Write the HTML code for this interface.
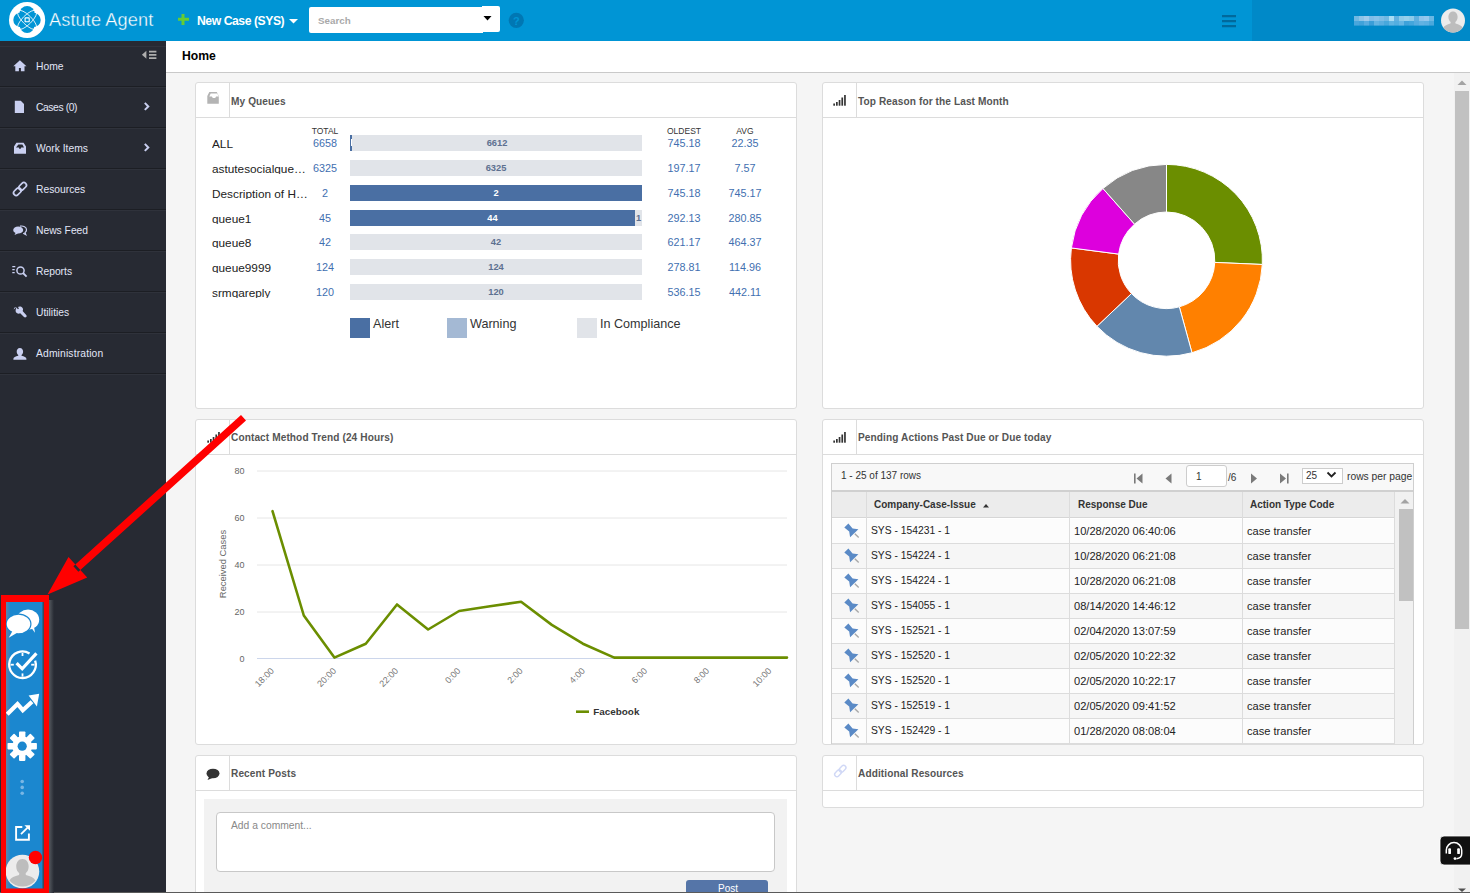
<!DOCTYPE html>
<html><head><meta charset="utf-8">
<style>
*{box-sizing:border-box;margin:0;padding:0}
html,body{width:1470px;height:893px;overflow:hidden;background:#f5f5f5;font-family:"Liberation Sans",sans-serif;position:relative}
.abs{position:absolute}
.t{position:absolute;white-space:nowrap;line-height:1}
#hdr{left:0;top:0;width:1470px;height:41px;background:#0095d5}
#hdr-r{left:1252px;top:0;width:218px;height:41px;background:#0089c8}
#side{left:0;top:41px;width:166px;height:852px;background:#272a33}
.sep{position:absolute;left:0;width:166px;height:2px;border-top:1px solid #1c1e24;border-bottom:1px solid #2f323b}
.nav{position:absolute;left:36px;font-size:10.3px;color:#e2e6f8;white-space:nowrap;line-height:1}
#title{left:166px;top:41px;width:1304px;height:32px;background:#fff;border-bottom:1px solid #c9c9c9}
.panel{position:absolute;background:#fff;border:1px solid #dcdcdc;border-radius:3px;overflow:hidden}
.ph{position:absolute;left:0;top:0;right:0;height:35px;border-bottom:1px solid #dcdcdc}
.ph .ic{position:absolute;left:0;top:0;width:34px;height:35px;border-right:1px solid #dcdcdc}
.ph .tt{position:absolute;left:35px;top:14px;line-height:1;font-size:10.1px;letter-spacing:0.1px;font-weight:bold;color:#555;white-space:nowrap}
#sb{left:1454px;top:73px;width:16px;height:820px;background:#f1f1f1}
#thumb{left:1455px;top:91px;width:14px;height:538px;background:#c1c1c1}
#ov{position:absolute;left:0;top:0;width:1470px;height:893px;pointer-events:none}
/* queues */
.ql{position:absolute;left:212px;width:97px;height:12px;overflow:hidden;font-size:11.8px;color:#222;white-space:nowrap;line-height:15px}
.qn{position:absolute;width:50px;text-align:center;font-size:10.8px;color:#3f6fb0;white-space:nowrap;line-height:15px}
.qh{position:absolute;width:50px;text-align:center;font-size:8.5px;color:#333;line-height:1}
.bar{position:absolute;left:350px;width:292px;height:16px;background:#e1e4e9}
.bd{position:absolute;left:0;top:0;height:16px;background:#4a6fa3}
.bl{position:absolute;top:0;height:16px;line-height:16px;text-align:center;font-size:9.3px;font-weight:bold;color:#5d7090}
.bl.w{color:#fff}
/* grid */
.gr{position:absolute;left:831px;width:565px;height:25px;border-bottom:1px solid #dedede;background:#fff;font-size:11px;color:#333;white-space:nowrap}
.gr div{position:absolute;top:0;line-height:25px}
.gr .c0{left:0;width:35px;height:25px;border-right:1px solid #dedede}
.gr .c1{left:36px;width:376px;height:25px;border-right:1px solid #dedede}
.gr .c2{left:412px;}
.gr .c3{left:416px}
</style></head><body>
<div id="hdr" class="abs"></div>
<div id="hdr-r" class="abs"></div>
<div class="t" style="left:49px;top:11px;font-size:18.2px;color:#fff;letter-spacing:0.1px;-webkit-text-stroke:0.35px #0095d5">Astute Agent</div>
<div class="t" style="left:197px;top:15px;font-size:12.2px;font-weight:bold;color:#fff;letter-spacing:-0.45px">New Case (SYS)</div>
<div class="abs" style="left:309px;top:7px;width:174px;height:26px;background:#fff;border-radius:2px 0 0 2px"></div>
<div class="abs" style="left:482px;top:6px;width:18px;height:26px;background:#fff;border-radius:0 2px 2px 0"></div>
<div class="t" style="left:318px;top:16px;font-size:9.8px;font-weight:bold;color:#a9a9a9">Search</div>

<div id="side" class="abs"></div>
<div class="abs" style="left:0;top:46px;width:166px;height:1px;background:#30333c"></div>
<div class="sep" style="top:86px"></div>
<div class="sep" style="top:127px"></div>
<div class="sep" style="top:168px"></div>
<div class="sep" style="top:209px"></div>
<div class="sep" style="top:250px"></div>
<div class="sep" style="top:291px"></div>
<div class="sep" style="top:332px"></div>
<div class="sep" style="top:373px"></div>
<div class="nav" style="top:62px">Home</div>
<div class="nav" style="top:103px;letter-spacing:-0.4px">Cases (0)</div>
<div class="nav" style="top:144px">Work Items</div>
<div class="nav" style="top:185px">Resources</div>
<div class="nav" style="top:226px">News Feed</div>
<div class="nav" style="top:267px">Reports</div>
<div class="nav" style="top:308px">Utilities</div>
<div class="nav" style="top:349px;letter-spacing:0.15px">Administration</div>

<div id="title" class="abs"></div>
<div class="t" style="left:182px;top:50px;font-size:12.2px;font-weight:bold;color:#000">Home</div>
<div id="sb" class="abs"></div>
<div id="thumb" class="abs"></div>

<div class="panel" style="left:195px;top:82px;width:602px;height:327px">
 <div class="ph"><div class="ic"></div><div class="tt">My Queues</div></div>
</div>
<div class="panel" style="left:822px;top:82px;width:602px;height:327px">
 <div class="ph"><div class="ic"></div><div class="tt">Top Reason for the Last Month</div></div>
</div>
<div class="panel" style="left:195px;top:419px;width:602px;height:326px">
 <div class="ph"><div class="ic"></div><div class="tt" style="top:13px">Contact Method Trend (24 Hours)</div></div>
</div>
<div class="panel" style="left:822px;top:419px;width:602px;height:326px">
 <div class="ph"><div class="ic"></div><div class="tt" style="top:13px">Pending Actions Past Due or Due today</div></div>
</div>
<div class="panel" style="left:195px;top:755px;width:602px;height:200px">
 <div class="ph"><div class="ic"></div><div class="tt" style="top:13px">Recent Posts</div></div>
</div>
<div class="panel" style="left:822px;top:755px;width:602px;height:53px">
 <div class="ph"><div class="ic"></div><div class="tt" style="top:13px">Additional Resources</div></div>
</div>
<div class="qh" style="left:300px;top:127px">TOTAL</div>
<div class="qh" style="left:659px;top:127px">OLDEST</div>
<div class="qh" style="left:720px;top:127px">AVG</div>
<div class="ql" style="top:137.00px">ALL</div>
<div class="qn" style="left:300px;top:136.00px">6658</div>
<div class="qn" style="left:659px;top:136.00px">745.18</div>
<div class="qn" style="left:720px;top:136.00px">22.35</div>
<div class="bar" style="top:135.00px"><div class="bd" style="left:0px;width:2px"></div><div class="bl" style="left:2px;width:290px">6612</div><div class="abs" style="left:1px;top:4px;width:1px;height:7px;background:#fff"></div></div>
<div class="ql" style="top:161.85px">astutesocialque…</div>
<div class="qn" style="left:300px;top:160.85px">6325</div>
<div class="qn" style="left:659px;top:160.85px">197.17</div>
<div class="qn" style="left:720px;top:160.85px">7.57</div>
<div class="bar" style="top:159.85px"><div class="bl" style="left:0px;width:292px">6325</div></div>
<div class="ql" style="top:186.70px">Description of H…</div>
<div class="qn" style="left:300px;top:185.70px">2</div>
<div class="qn" style="left:659px;top:185.70px">745.18</div>
<div class="qn" style="left:720px;top:185.70px">745.17</div>
<div class="bar" style="top:184.70px"><div class="bd" style="left:0px;width:292px"></div><div class="bl w" style="left:0px;width:292px">2</div></div>
<div class="ql" style="top:211.55px">queue1</div>
<div class="qn" style="left:300px;top:210.55px">45</div>
<div class="qn" style="left:659px;top:210.55px">292.13</div>
<div class="qn" style="left:720px;top:210.55px">280.85</div>
<div class="bar" style="top:209.55px"><div class="bd" style="left:0px;width:285px"></div><div class="bl w" style="left:0px;width:285px">44</div><div class="bl" style="left:285px;width:7px">1</div></div>
<div class="ql" style="top:236.40px">queue8</div>
<div class="qn" style="left:300px;top:235.40px">42</div>
<div class="qn" style="left:659px;top:235.40px">621.17</div>
<div class="qn" style="left:720px;top:235.40px">464.37</div>
<div class="bar" style="top:234.40px"><div class="bl" style="left:0px;width:292px">42</div></div>
<div class="ql" style="top:261.25px">queue9999</div>
<div class="qn" style="left:300px;top:260.25px">124</div>
<div class="qn" style="left:659px;top:260.25px">278.81</div>
<div class="qn" style="left:720px;top:260.25px">114.96</div>
<div class="bar" style="top:259.25px"><div class="bl" style="left:0px;width:292px">124</div></div>
<div class="ql" style="top:286.10px">srmqareply</div>
<div class="qn" style="left:300px;top:285.10px">120</div>
<div class="qn" style="left:659px;top:285.10px">536.15</div>
<div class="qn" style="left:720px;top:285.10px">442.11</div>
<div class="bar" style="top:284.10px"><div class="bl" style="left:0px;width:292px">120</div></div>
<div class="abs" style="left:350px;top:318px;width:20px;height:20px;background:#4a6fa3"></div>
<div class="abs" style="left:447px;top:318px;width:20px;height:20px;background:#a4b9d4"></div>
<div class="abs" style="left:577px;top:318px;width:20px;height:20px;background:#e1e4e9"></div>
<div class="t" style="left:373px;top:318px;font-size:12.6px;color:#333">Alert</div>
<div class="t" style="left:470px;top:318px;font-size:12.6px;color:#333">Warning</div>
<div class="t" style="left:600px;top:318px;font-size:12.6px;color:#333">In Compliance</div>
<svg class="abs" style="left:0;top:0" width="1470" height="893" viewBox="0 0 1470 893"><path d="M1166.50 164.40A95.9 95.9 0 0 1 1262.31 264.48L1214.75 262.41A48.3 48.3 0 0 0 1166.50 212.00Z" fill="#6b8e00" stroke="#fff" stroke-width="1" stroke-linejoin="round"/><path d="M1262.31 264.48A95.9 95.9 0 0 1 1191.97 352.76L1179.33 306.87A48.3 48.3 0 0 0 1214.75 262.41Z" fill="#ff8000" stroke="#fff" stroke-width="1" stroke-linejoin="round"/><path d="M1191.97 352.76A95.9 95.9 0 0 1 1096.94 326.31L1131.46 293.55A48.3 48.3 0 0 0 1179.33 306.87Z" fill="#6287ad" stroke="#fff" stroke-width="1" stroke-linejoin="round"/><path d="M1096.94 326.31A95.9 95.9 0 0 1 1071.40 247.95L1118.60 254.08A48.3 48.3 0 0 0 1131.46 293.55Z" fill="#d93700" stroke="#fff" stroke-width="1" stroke-linejoin="round"/><path d="M1071.40 247.95A95.9 95.9 0 0 1 1102.95 188.48L1134.50 224.13A48.3 48.3 0 0 0 1118.60 254.08Z" fill="#dd00dd" stroke="#fff" stroke-width="1" stroke-linejoin="round"/><path d="M1102.95 188.48A95.9 95.9 0 0 1 1166.50 164.40L1166.50 212.00A48.3 48.3 0 0 0 1134.50 224.13Z" fill="#878787" stroke="#fff" stroke-width="1" stroke-linejoin="round"/></svg>
<svg class="abs" style="left:0;top:0" width="1470" height="893" viewBox="0 0 1470 893" font-family="Liberation Sans">
<path d="M257 471H787" stroke="#e6e6e6" stroke-width="1"/>
<text x="244.5" y="474.2" font-size="9" fill="#666" text-anchor="end">80</text>
<path d="M257 518H787" stroke="#e6e6e6" stroke-width="1"/>
<text x="244.5" y="521.2" font-size="9" fill="#666" text-anchor="end">60</text>
<path d="M257 565H787" stroke="#e6e6e6" stroke-width="1"/>
<text x="244.5" y="568.2" font-size="9" fill="#666" text-anchor="end">40</text>
<path d="M257 612H787" stroke="#e6e6e6" stroke-width="1"/>
<text x="244.5" y="615.2" font-size="9" fill="#666" text-anchor="end">20</text>
<path d="M257 658.5H787" stroke="#ccd6eb" stroke-width="1"/>
<text x="244.5" y="661.7" font-size="9" fill="#666" text-anchor="end">0</text>
<text x="0" y="0" font-size="9.4" fill="#666" text-anchor="middle" transform="translate(226 564) rotate(-90)">Received Cases</text>
<path d="M272.5 511.2 L303.8 615.5 L334.4 657.6 L365.8 643.8 L397.0 604.5 L428.1 629.5 L459.1 611.0 L490.1 606.3 L521.1 601.7 L551.8 624.9 L582.9 643.7 L614.2 657.6 L645.3 657.6 L676.4 657.6 L707.5 657.6 L738.6 657.6 L769.7 657.6 L787.0 657.6" fill="none" stroke="#6b8e00" stroke-width="2.6" stroke-linejoin="round" stroke-linecap="round"/>
<text x="0" y="0" font-size="9" fill="#777" text-anchor="end" transform="translate(274.5 671.5) rotate(-45)">18:00</text>
<text x="0" y="0" font-size="9" fill="#777" text-anchor="end" transform="translate(336.7 671.5) rotate(-45)">20:00</text>
<text x="0" y="0" font-size="9" fill="#777" text-anchor="end" transform="translate(398.9 671.5) rotate(-45)">22:00</text>
<text x="0" y="0" font-size="9" fill="#777" text-anchor="end" transform="translate(461.1 671.5) rotate(-45)">0:00</text>
<text x="0" y="0" font-size="9" fill="#777" text-anchor="end" transform="translate(523.3 671.5) rotate(-45)">2:00</text>
<text x="0" y="0" font-size="9" fill="#777" text-anchor="end" transform="translate(585.5 671.5) rotate(-45)">4:00</text>
<text x="0" y="0" font-size="9" fill="#777" text-anchor="end" transform="translate(647.7 671.5) rotate(-45)">6:00</text>
<text x="0" y="0" font-size="9" fill="#777" text-anchor="end" transform="translate(709.9 671.5) rotate(-45)">8:00</text>
<text x="0" y="0" font-size="9" fill="#777" text-anchor="end" transform="translate(772.1 671.5) rotate(-45)">10:00</text>
<path d="M576 711.7H589" stroke="#6b8e00" stroke-width="2.6"/>
<text x="593.3" y="715.2" font-size="9.9" font-weight="bold" fill="#333">Facebook</text>
</svg>
<div class="abs" style="left:831px;top:463px;width:583px;height:281px;overflow:hidden;border:1px solid #cfcfcf;border-bottom:none;background:#fff">
<div class="abs" style="left:0;top:0;width:581px;height:26px;background:#f8f8f8"></div>
<div class="abs" style="left:0;top:26px;width:581px;height:2px;background:#d0d0d0"></div>
<div class="t" style="left:9px;top:7px;font-size:10px;color:#333">1 - 25 of 137 rows</div>
<div class="abs" style="left:354px;top:1px;width:41px;height:22px;background:#fff;border:1px solid #cdcdcd;border-radius:3px"></div>
<div class="t" style="left:364px;top:8px;font-size:10px;color:#333">1</div>
<div class="t" style="left:396px;top:9px;font-size:10px;color:#333">/6</div>
<div class="abs" style="left:470px;top:4px;width:41px;height:16px;background:#fff;border:1px solid #cdcdcd"></div>
<div class="t" style="left:474px;top:7px;font-size:10px;color:#333">25</div>
<div class="t" style="left:515px;top:8px;font-size:10.3px;color:#333">rows per page</div>
<div class="abs" style="left:0;top:28px;width:563px;height:26px;background:#ececec;border-bottom:1px solid #d6d6d6"></div>
<div class="abs" style="left:563px;top:28px;width:18px;height:253px;background:#f1f1f1"></div>
<div class="abs" style="left:567px;top:45px;width:14px;height:92px;background:#c1c1c1"></div>
<div class="abs" style="left:34px;top:28px;width:1px;height:253px;background:#dcdcdc"></div>
<div class="abs" style="left:237px;top:28px;width:1px;height:253px;background:#dcdcdc"></div>
<div class="abs" style="left:410px;top:28px;width:1px;height:253px;background:#dcdcdc"></div>
<div class="abs" style="left:562px;top:28px;width:1px;height:253px;background:#dcdcdc"></div>
<div class="t" style="left:42px;top:36px;font-size:10px;font-weight:bold;color:#333">Company-Case-Issue</div>
<div class="t" style="left:246px;top:36px;font-size:10px;font-weight:bold;color:#333">Response Due</div>
<div class="t" style="left:418px;top:36px;font-size:10px;font-weight:bold;color:#333">Action Type Code</div>
<div class="abs" style="left:0;top:55px;width:563px;height:25px;background:#fcfcfc;border-bottom:1px solid #dcdcdc"></div>
<div class="t" style="left:39px;top:62px;font-size:10.3px;color:#222">SYS - 154231 - 1</div>
<div class="t" style="left:242px;top:62px;font-size:11.1px;color:#222">10/28/2020 06:40:06</div>
<div class="t" style="left:415px;top:62px;font-size:11.1px;color:#222">case transfer</div>
<div class="abs" style="left:0;top:80px;width:563px;height:25px;background:#f6f6f6;border-bottom:1px solid #dcdcdc"></div>
<div class="t" style="left:39px;top:87px;font-size:10.3px;color:#222">SYS - 154224 - 1</div>
<div class="t" style="left:242px;top:87px;font-size:11.1px;color:#222">10/28/2020 06:21:08</div>
<div class="t" style="left:415px;top:87px;font-size:11.1px;color:#222">case transfer</div>
<div class="abs" style="left:0;top:105px;width:563px;height:25px;background:#fcfcfc;border-bottom:1px solid #dcdcdc"></div>
<div class="t" style="left:39px;top:112px;font-size:10.3px;color:#222">SYS - 154224 - 1</div>
<div class="t" style="left:242px;top:112px;font-size:11.1px;color:#222">10/28/2020 06:21:08</div>
<div class="t" style="left:415px;top:112px;font-size:11.1px;color:#222">case transfer</div>
<div class="abs" style="left:0;top:130px;width:563px;height:25px;background:#f6f6f6;border-bottom:1px solid #dcdcdc"></div>
<div class="t" style="left:39px;top:137px;font-size:10.3px;color:#222">SYS - 154055 - 1</div>
<div class="t" style="left:242px;top:137px;font-size:11.1px;color:#222">08/14/2020 14:46:12</div>
<div class="t" style="left:415px;top:137px;font-size:11.1px;color:#222">case transfer</div>
<div class="abs" style="left:0;top:155px;width:563px;height:25px;background:#fcfcfc;border-bottom:1px solid #dcdcdc"></div>
<div class="t" style="left:39px;top:162px;font-size:10.3px;color:#222">SYS - 152521 - 1</div>
<div class="t" style="left:242px;top:162px;font-size:11.1px;color:#222">02/04/2020 13:07:59</div>
<div class="t" style="left:415px;top:162px;font-size:11.1px;color:#222">case transfer</div>
<div class="abs" style="left:0;top:180px;width:563px;height:25px;background:#f6f6f6;border-bottom:1px solid #dcdcdc"></div>
<div class="t" style="left:39px;top:187px;font-size:10.3px;color:#222">SYS - 152520 - 1</div>
<div class="t" style="left:242px;top:187px;font-size:11.1px;color:#222">02/05/2020 10:22:32</div>
<div class="t" style="left:415px;top:187px;font-size:11.1px;color:#222">case transfer</div>
<div class="abs" style="left:0;top:205px;width:563px;height:25px;background:#fcfcfc;border-bottom:1px solid #dcdcdc"></div>
<div class="t" style="left:39px;top:212px;font-size:10.3px;color:#222">SYS - 152520 - 1</div>
<div class="t" style="left:242px;top:212px;font-size:11.1px;color:#222">02/05/2020 10:22:17</div>
<div class="t" style="left:415px;top:212px;font-size:11.1px;color:#222">case transfer</div>
<div class="abs" style="left:0;top:230px;width:563px;height:25px;background:#f6f6f6;border-bottom:1px solid #dcdcdc"></div>
<div class="t" style="left:39px;top:237px;font-size:10.3px;color:#222">SYS - 152519 - 1</div>
<div class="t" style="left:242px;top:237px;font-size:11.1px;color:#222">02/05/2020 09:41:52</div>
<div class="t" style="left:415px;top:237px;font-size:11.1px;color:#222">case transfer</div>
<div class="abs" style="left:0;top:255px;width:563px;height:25px;background:#fcfcfc;border-bottom:1px solid #dcdcdc"></div>
<div class="t" style="left:39px;top:262px;font-size:10.3px;color:#222">SYS - 152429 - 1</div>
<div class="t" style="left:242px;top:262px;font-size:11.1px;color:#222">01/28/2020 08:08:04</div>
<div class="t" style="left:415px;top:262px;font-size:11.1px;color:#222">case transfer</div>
<div class="abs" style="left:0;top:280px;width:563px;height:25px;background:#f6f6f6;border-bottom:1px solid #dcdcdc"></div>
<div class="t" style="left:39px;top:287px;font-size:10.3px;color:#222">SYS - 152428 - 1</div>
<div class="t" style="left:242px;top:287px;font-size:11.1px;color:#222">01/28/2020 08:00:00</div>
<div class="t" style="left:415px;top:287px;font-size:11.1px;color:#222">case transfer</div>
<div class="abs" style="left:34px;top:55px;width:1px;height:226px;background:#dcdcdc"></div>
<div class="abs" style="left:237px;top:55px;width:1px;height:226px;background:#dcdcdc"></div>
<div class="abs" style="left:410px;top:55px;width:1px;height:226px;background:#dcdcdc"></div>
<div class="abs" style="left:562px;top:55px;width:1px;height:226px;background:#dcdcdc"></div>
</div>
<svg class="abs" style="left:0;top:0" width="1470" height="893" viewBox="0 0 1470 893">
<g fill="#7a7a7a">
<path d="M1134 473.5h1.6v10h-1.6zM1142.5 473.5v10l-6-5z"/>
<path d="M1171.5 473.5v10l-6-5z"/>
<path d="M1251 473.5v10l6-5z"/>
<path d="M1280 473.5v10l6-5zM1287 473.5h1.6v10h-1.6z"/>
</g>
<path d="M1327.5 472.5l4 4 4-4" fill="none" stroke="#222" stroke-width="1.8"/>
<path d="M983 507.5l3-3.5 3 3.5z" fill="#333"/>
<path d="M1400.5 503.5l4.5-4.5 4.5 4.5z" fill="#a3a3a3"/>
<g transform="translate(831 517)"><path d="M13.3 10.4L17.4 6.6L21.6 11.4L27.4 12.3L19.1 20.2L18.2 14.4Z" fill="#5a8ac6"/><path d="M23.8 16.8L27.7 20.6" stroke="#a8a8a8" stroke-width="1.4"/></g>
<g transform="translate(831 542)"><path d="M13.3 10.4L17.4 6.6L21.6 11.4L27.4 12.3L19.1 20.2L18.2 14.4Z" fill="#5a8ac6"/><path d="M23.8 16.8L27.7 20.6" stroke="#a8a8a8" stroke-width="1.4"/></g>
<g transform="translate(831 567)"><path d="M13.3 10.4L17.4 6.6L21.6 11.4L27.4 12.3L19.1 20.2L18.2 14.4Z" fill="#5a8ac6"/><path d="M23.8 16.8L27.7 20.6" stroke="#a8a8a8" stroke-width="1.4"/></g>
<g transform="translate(831 592)"><path d="M13.3 10.4L17.4 6.6L21.6 11.4L27.4 12.3L19.1 20.2L18.2 14.4Z" fill="#5a8ac6"/><path d="M23.8 16.8L27.7 20.6" stroke="#a8a8a8" stroke-width="1.4"/></g>
<g transform="translate(831 617)"><path d="M13.3 10.4L17.4 6.6L21.6 11.4L27.4 12.3L19.1 20.2L18.2 14.4Z" fill="#5a8ac6"/><path d="M23.8 16.8L27.7 20.6" stroke="#a8a8a8" stroke-width="1.4"/></g>
<g transform="translate(831 642)"><path d="M13.3 10.4L17.4 6.6L21.6 11.4L27.4 12.3L19.1 20.2L18.2 14.4Z" fill="#5a8ac6"/><path d="M23.8 16.8L27.7 20.6" stroke="#a8a8a8" stroke-width="1.4"/></g>
<g transform="translate(831 667)"><path d="M13.3 10.4L17.4 6.6L21.6 11.4L27.4 12.3L19.1 20.2L18.2 14.4Z" fill="#5a8ac6"/><path d="M23.8 16.8L27.7 20.6" stroke="#a8a8a8" stroke-width="1.4"/></g>
<g transform="translate(831 692)"><path d="M13.3 10.4L17.4 6.6L21.6 11.4L27.4 12.3L19.1 20.2L18.2 14.4Z" fill="#5a8ac6"/><path d="M23.8 16.8L27.7 20.6" stroke="#a8a8a8" stroke-width="1.4"/></g>
<g transform="translate(831 717)"><path d="M13.3 10.4L17.4 6.6L21.6 11.4L27.4 12.3L19.1 20.2L18.2 14.4Z" fill="#5a8ac6"/><path d="M23.8 16.8L27.7 20.6" stroke="#a8a8a8" stroke-width="1.4"/></g>
</svg>
<div class="abs" style="left:204px;top:799px;width:583px;height:94px;background:#f2f2f2"></div>
<div class="abs" style="left:216px;top:812px;width:559px;height:60px;background:#fff;border:1px solid #c8c8c8;border-radius:4px"></div>
<div class="t" style="left:231px;top:821px;font-size:10.3px;color:#888">Add a comment...</div>
<div class="abs" style="left:686px;top:880px;width:82px;height:16px;background:#5575a8;border-radius:3px"></div>
<div class="t" style="left:718px;top:884px;font-size:10px;color:#fff">Post</div>
<div class="abs" style="left:0;top:892px;width:1470px;height:1px;background:#5a5a5a"></div>
<svg id="ov" viewBox="0 0 1470 893">
 <!-- logo -->
 <circle cx="27.1" cy="20" r="18.1" fill="#fff"/>
 <g fill="#0095d5"><circle cx="27.1" cy="13.7" r="7.6"/><circle cx="27.1" cy="25.6" r="7.4"/><circle cx="20.6" cy="19.9" r="7.3"/><circle cx="33.6" cy="19.9" r="7.1"/></g>
 <g fill="none" stroke="#fff" stroke-width="0.8">
  <ellipse cx="27.1" cy="19.9" rx="12.8" ry="4.6" transform="rotate(45 27.1 19.9)"/>
  <ellipse cx="27.1" cy="19.9" rx="12.8" ry="4.6" transform="rotate(-45 27.1 19.9)"/>
  <rect x="25.1" y="17.9" width="4.1" height="3.9" rx="0.4" stroke-width="1.1"/>
 </g>
 <path d="M181.5 14h3v11h-3zM178 17.8h11v3h-11z" fill="#66cc33"/>
 <path d="M289 19h9l-4.5 4.5z" fill="#fff"/>
 <path d="M483.5 16h8l-4 4.5z" fill="#000"/>
 <circle cx="516.3" cy="20.3" r="7.6" fill="#0077b3"/>
 <text x="516.3" y="24.6" font-size="11" font-weight="bold" fill="#0095d5" text-anchor="middle" font-family="Liberation Sans">?</text>
 <path d="M1222 15h14v2.2h-14zM1222 20h14v2.2h-14zM1222 25h14v2.2h-14z" fill="#00699c"/>
 <rect x="1354" y="16" width="5" height="5" fill="#70b8e2"/><rect x="1359" y="16" width="5" height="5" fill="#8cc4e8"/><rect x="1364" y="16" width="5" height="5" fill="#9ecbec"/><rect x="1369" y="16" width="5" height="5" fill="#7fbde8"/><rect x="1374" y="16" width="5" height="5" fill="#86c2ea"/><rect x="1379" y="16" width="5" height="5" fill="#7cbde6"/><rect x="1384" y="16" width="5" height="5" fill="#70b8e2"/><rect x="1389" y="16" width="5" height="5" fill="#a8dcf4"/><rect x="1394" y="16" width="5" height="5" fill="#60b0e0"/><rect x="1399" y="16" width="5" height="5" fill="#8ccbea"/><rect x="1404" y="16" width="5" height="5" fill="#96d0ec"/><rect x="1409" y="16" width="5" height="5" fill="#8ccbea"/><rect x="1414" y="16" width="5" height="5" fill="#5eb0e0"/><rect x="1419" y="16" width="5" height="5" fill="#8cc4ec"/><rect x="1424" y="16" width="5" height="5" fill="#94c8ee"/><rect x="1429" y="16" width="5" height="5" fill="#6ab8e4"/><rect x="1354" y="21" width="5" height="4.6" fill="#48a6dc"/><rect x="1359" y="21" width="5" height="4.6" fill="#40a2da"/><rect x="1364" y="21" width="5" height="4.6" fill="#58ace0"/><rect x="1369" y="21" width="5" height="4.6" fill="#3a9ed8"/><rect x="1374" y="21" width="5" height="4.6" fill="#64b4e2"/><rect x="1379" y="21" width="5" height="4.6" fill="#5aaee0"/><rect x="1384" y="21" width="5" height="4.6" fill="#48a8dc"/><rect x="1389" y="21" width="5" height="4.6" fill="#60b4e2"/><rect x="1394" y="21" width="5" height="4.6" fill="#54aee0"/><rect x="1399" y="21" width="5" height="4.6" fill="#66b6e4"/><rect x="1404" y="21" width="5" height="4.6" fill="#3ea2da"/><rect x="1409" y="21" width="5" height="4.6" fill="#44a6dc"/><rect x="1414" y="21" width="5" height="4.6" fill="#56ace0"/><rect x="1419" y="21" width="5" height="4.6" fill="#62b2e2"/><rect x="1424" y="21" width="5" height="4.6" fill="#5cb0e2"/><rect x="1429" y="21" width="5" height="4.6" fill="#4aa8dc"/>
 <circle cx="1453" cy="20.5" r="12" fill="#ececec"/>
 <path d="M1453 11.5c-3 0-4.6 2.6-4.6 5.6 0 2.4 1 4.2 2.3 5l-0.2 1.4c-3.4 0.8-6 2.2-7.2 4.2a12 12 0 0 0 19.4 0c-1.2-2-3.8-3.4-7.2-4.2l-0.2-1.4c1.3-0.8 2.3-2.6 2.3-5 0-3-1.6-5.6-4.6-5.6z" fill="#bdbdbd"/>

 <!-- sidebar icons -->
 <g fill="#c9cff0">
  <path d="M19.9 60.2L13.3 66.3h2v5h3.6v-3.4h2v3.4h3.6v-5h2z"/>
  <path d="M14.8 100.7h6l3.2 3.2v9h-9.2z"/>
  <path d="M14 146.5l2.4-3.8h7.2l2.4 3.8v7.3h-12z M16 147.5h2.8l0.8 1.5h0.8l0.8-1.5h2.8l-1.6-3h-4z" fill-rule="evenodd"/>
  <g transform="translate(20 189) rotate(-45)" fill="none" stroke="#c9cff0" stroke-width="1.7"><rect x="-8" y="-2.6" width="8.6" height="5.2" rx="2.6"/><rect x="-0.6" y="-2.6" width="8.6" height="5.2" rx="2.6"/></g>
  <ellipse cx="18.2" cy="230" rx="5" ry="3.6"/>
  <path d="M14.5 235l1.5-3 2 1.5z"/>
  <path d="M20 226.2a5 3.6 0 0 1 6.5 3.5c0 1.2-0.6 2.2-1.5 2.8l0.8 2.2-2.6-1.5" fill="none" stroke="#c9cff0" stroke-width="1.2"/>
  <path d="M12.3 266h3v1.2h-3zM12.3 269h2.4v1.2h-2.4zM12.3 272h2.4v1.2h-2.4z"/>
  <circle cx="20.5" cy="270.5" r="3.6" fill="none" stroke="#c9cff0" stroke-width="1.5"/>
  <path d="M23 273l3.6 3.6" stroke="#c9cff0" stroke-width="1.8"/>
  <path d="M13.8 309.5l2.2-2.2 2 2 1-1-1.2-1.2c1.4-1 3.6-0.8 4.6 0.6 0.8 1 0.8 2.4 0.2 3.4l3.6 3.8c0.6 0.6 0.6 1.6 0 2.2s-1.6 0.6-2.2 0l-3.8-3.8c-1.1 0.6-2.5 0.5-3.4-0.2-1.4-1-1.6-3.2-0.6-4.6l-1.2-1.2-1 1z"/>
  <path d="M19.9 348c-2.2 0-3.2 1.8-3.2 3.8 0 1.6 0.8 2.8 1.6 3.3l-0.1 0.7c-2.6 0.6-4.8 1.5-4.8 3v1h13v-1c0-1.5-2.2-2.4-4.8-3l-0.1-0.7c0.8-0.5 1.6-1.7 1.6-3.3 0-2-1-3.8-3.2-3.8z"/>
 </g>
 <g fill="#c9cff0"><path d="M145.5 110.6l-1.4-1.4 2.8-2.8-2.8-2.8 1.4-1.4 4.2 4.2z"/><path d="M145.5 151.6l-1.4-1.4 2.8-2.8-2.8-2.8 1.4-1.4 4.2 4.2z"/></g>
 <g fill="#aeaeae"><path d="M141.9 54.8l4.5-4v8z"/><path d="M149 50.7h7.4h0v1.7h-7.4zM149 54h7.4v1.7h-7.4zM149 57.3h7.4v1.7h-7.4z"/></g>

 <!-- panel header icons -->
 <path d="M207.3 96l2-4h7.5l2 4v7.7h-11.5z M209.3 96.5h2.6l0.9 1.6h2.4l0.9-1.6h2.6l-1.4-3h-6.6z" fill="#b4b4b4" fill-rule="evenodd"/>
 <g fill="#333"><rect x="833.3" y="103.5" width="1.7" height="2.2"/><rect x="836" y="102" width="1.7" height="3.7"/><rect x="838.7" y="100" width="1.7" height="5.7"/><rect x="841.4" y="97.5" width="1.7" height="8.2"/><rect x="844.1" y="95" width="1.7" height="10.7"/></g>
 <g fill="#333"><rect x="833.3" y="440.5" width="1.7" height="2.2"/><rect x="836" y="439" width="1.7" height="3.7"/><rect x="838.7" y="437" width="1.7" height="5.7"/><rect x="841.4" y="434.5" width="1.7" height="8.2"/><rect x="844.1" y="432" width="1.7" height="10.7"/></g>
 <g fill="#333"><rect x="207.3" y="440.5" width="1.7" height="2.2"/><rect x="210" y="439" width="1.7" height="3.7"/><rect x="212.7" y="437" width="1.7" height="5.7"/><rect x="215.4" y="434.5" width="1.7" height="8.2"/><rect x="218.1" y="432" width="1.7" height="10.7"/></g>
 <ellipse cx="213" cy="773.5" rx="6.5" ry="4.8" fill="#333"/>
 <path d="M207.5 780l2-4 3 2z" fill="#333"/>
 <g transform="translate(840.3 771) rotate(-45)" fill="none" stroke="#d0d8f6" stroke-width="1.4"><rect x="-7" y="-2.3" width="7.6" height="4.6" rx="2.3"/><rect x="-0.6" y="-2.3" width="7.6" height="4.6" rx="2.3"/></g>

 <!-- main scrollbar arrows -->
 <path d="M1457.5 85l4.5-4.5 4.5 4.5z" fill="#a3a3a3"/>
 <path d="M1458 888.5h8l-4 3.5z" fill="#505050"/>
 <!-- headset button -->
 <rect x="1440" y="836" width="34" height="29" rx="4" fill="#111" stroke="#fff" stroke-width="0.8"/>
 <path d="M1446.3 853.5v-3.2a7.7 7.7 0 0 1 15.4 0v3.5c0 2.6-2 4.6-5.2 4.9" fill="none" stroke="#fff" stroke-width="1.5"/>
 <rect x="1448.3" y="848.3" width="2.7" height="5.8" rx="0.9" fill="#fff"/>
 <rect x="1457.2" y="848.3" width="2.7" height="5.8" rx="0.9" fill="#fff"/>
 <circle cx="1455" cy="858.6" r="1.4" fill="#fff"/>
</svg>
<svg class="abs" style="left:0;top:0" width="1470" height="893" viewBox="0 0 1470 893">
 <defs>
  <linearGradient id="lg" x1="0" x2="1" y1="0" y2="0"><stop offset="0" stop-color="#5f86a6"/><stop offset="0.12" stop-color="#1b87cf"/><stop offset="1" stop-color="#1b87cf"/></linearGradient>
  <linearGradient id="sh" x1="0" x2="1" y1="0" y2="0"><stop offset="0" stop-color="#555a60"/><stop offset="1" stop-color="#272a33"/></linearGradient>
 </defs>
 <rect x="49" y="600" width="5" height="293" fill="url(#sh)"/>
 <rect x="6" y="600" width="38" height="293" fill="url(#lg)"/>
 <rect x="42.5" y="600" width="1.5" height="293" fill="#3a4a5a"/>
 <!-- chat bubbles -->
 <g fill="#fff">
  <ellipse cx="28" cy="619.6" rx="11.2" ry="10.2"/>
  <path d="M30 626l5 6.8-1-6z"/>
  <ellipse cx="18.5" cy="624" rx="12.4" ry="9.9" stroke="#1b87cf" stroke-width="1.2"/>
  <path d="M12.5 631l-3.8 6.8 8.5-5z"/>
 </g>
 <!-- clock check -->
 <path d="M29.55 653.42A13.3 13.3 0 1 0 35.15 660.59" fill="none" stroke="#fff" stroke-width="2.3"/>
 <g stroke="#fff" stroke-width="1.8"><path d="M22.5 652.8v3.2"/><path d="M22.5 673.4v3.2"/><path d="M10.6 664.7h3.2"/><path d="M31.2 664.7h3.2"/></g>
 <path d="M16.6 663.2l5.6 5.6 14.2-15.4" fill="none" stroke="#fff" stroke-width="3.2"/>
 <!-- trend -->
 <path d="M7.2 714.2l10.3-10.2 5.3 6.2 9.2-8.4" fill="none" stroke="#fff" stroke-width="4.2" stroke-linejoin="miter"/>
 <path d="M28.6 695.6l10.6-1.8-2.3 12.8z" fill="#fff"/>
 <!-- gear -->
 <g transform="translate(22.2 746.2)" fill="#fff">
  <circle r="10"/>
  <g id="tooth"><rect x="-3.2" y="-14.7" width="6.4" height="6" rx="0.8"/></g>
  <use href="#tooth" transform="rotate(45)"/><use href="#tooth" transform="rotate(90)"/><use href="#tooth" transform="rotate(135)"/>
  <use href="#tooth" transform="rotate(180)"/><use href="#tooth" transform="rotate(225)"/><use href="#tooth" transform="rotate(270)"/><use href="#tooth" transform="rotate(315)"/>
  <circle r="4.6" fill="#1b87cf"/>
 </g>
 <g fill="#79b6e4"><circle cx="22.2" cy="781.5" r="1.8"/><circle cx="22.2" cy="787.4" r="1.8"/><circle cx="22.2" cy="793.3" r="1.8"/></g>
 <!-- external link -->
 <path d="M22.3 827h-6.2v12.8h12.8v-6.2" fill="none" stroke="#fff" stroke-width="1.9"/>
 <path d="M21 834.2l7.6-7.6" stroke="#fff" stroke-width="1.8"/>
 <path d="M24.4 825.2h5.6v5.6z" fill="#fff"/>
 <!-- avatar -->
 <circle cx="22.45" cy="871.5" r="16.8" fill="#ececec"/>
 <path d="M22.45 859c-4 0-6.2 3.4-6.2 7.6 0 3.2 1.4 5.6 3 6.6l-0.2 1.8c-4.6 1-8 2.8-9.6 5.4a16.8 16.8 0 0 0 26 0c-1.6-2.6-5-4.4-9.6-5.4l-0.2-1.8c1.6-1 3-3.4 3-6.6 0-4.2-2.2-7.6-6.2-7.6z" fill="#bdbdbd"/>
 <circle cx="35.5" cy="857.5" r="6.7" fill="#f00"/>
 <!-- red box -->
 <g fill="#f00">
  <rect x="1" y="595" width="48" height="7"/>
  <rect x="1" y="595" width="5" height="298"/>
  <rect x="44" y="595" width="5" height="298"/>
  <rect x="1" y="888.5" width="48" height="4.5"/>
 </g>
 <!-- arrow -->
 <path d="M246 420.5L241 414.9L73.4 566.2L78.4 571.8ZM47.5 594.5L68.5 556.9L87.2 577.5Z" fill="#f00" fill-rule="nonzero"/>
</svg>
</body></html>
